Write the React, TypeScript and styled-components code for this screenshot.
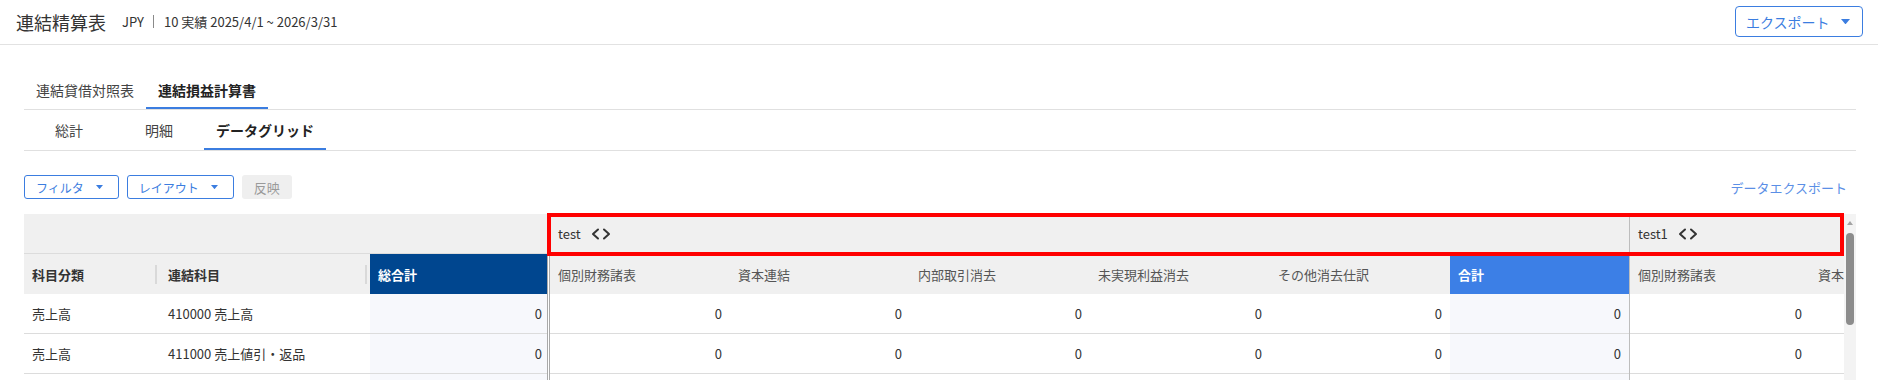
import React from 'react';
import styled, { createGlobalStyle } from 'styled-components';

const Blue = '#3b7de0';
const Line = '#dcdcdc';
const HeadBg = '#f0f0f0';

const GlobalStyle = createGlobalStyle`
  html, body { margin: 0; padding: 0; background: #fff; }
  body {
    font-family: "Noto Sans CJK JP", "Noto Sans", sans-serif;
    color: #333;
    overflow: hidden;
  }
  * { box-sizing: border-box; }
`;

const TopBar = styled.header`
    height: 45px;
    display: flex;
    align-items: center;
    justify-content: space-between;
    padding: 0 15px 1px 16px;
    border-bottom: 1px solid #e2e2e2;
`;

const TitleGroup = styled.div`
    display: flex;
    align-items: center;
`;

const Title = styled.h1`
    margin: 0 16px 0 0;
    font-size: 18px;
    font-weight: 400;
    line-height: 1;
    color: #333;
`;

const Meta = styled.div`
    display: flex;
    align-items: center;
    font-size: 13px;
    color: #333;
`;

const MetaDivider = styled.span`
    display: inline-block;
    width: 1px;
    height: 13px;
    background: #8a8a8a;
    margin: 0 10px 0 9px;
`;

const ExportButton = styled.button`
    width: 128px;
    height: 31px;
    display: flex;
    align-items: center;
    justify-content: space-between;
    padding: 0 12px 0 10px;
    background: #fff;
    border: 1px solid ${Blue};
    border-radius: 4px;
    color: ${Blue};
    font-family: inherit;
    font-size: 14px;
`;

const Main = styled.main`
    padding: 0 22px 0 24px;
`;

const Tabs = styled.nav`
    margin-top: 24px;
    height: 41px;
    display: flex;
    border-bottom: 1px solid #e0e0e0;
`;

const Tab = styled.div<{ $active?: boolean }>`
    height: 40px;
    padding: 4px 12px 0;
    display: flex;
    align-items: center;
    font-size: 14px;
    font-weight: ${p => (p.$active ? 700 : 400)};
    color: ${p => (p.$active ? '#222' : '#444')};
    border-bottom: 2px solid ${p => (p.$active ? Blue : 'transparent')};
`;

const SubTabs = styled(Tabs)`
    margin-top: 0;
`;

const SubTab = styled(Tab)`
    min-width: 90px;
    padding: 2px 12px 0;
    justify-content: center;
`;

const Toolbar = styled.div`
    margin-top: 24px;
    height: 24px;
    display: flex;
    align-items: center;
    justify-content: space-between;
`;

const ButtonGroup = styled.div`
    display: flex;
    gap: 8px;
`;

const DropButton = styled.button`
    height: 24px;
    display: flex;
    align-items: center;
    gap: 12px;
    padding: 0 15px 0 11px;
    background: #fff;
    border: 1px solid ${Blue};
    border-radius: 3px;
    color: ${Blue};
    font-family: inherit;
    font-size: 12px;
`;

const ApplyButton = styled.button`
    height: 24px;
    padding: 0 12px;
    background: #efefef;
    border: none;
    border-radius: 3px;
    color: #9a9a9a;
    font-family: inherit;
    font-size: 13px;
`;

const TextLink = styled.a`
    margin-right: 9px;
    font-size: 13px;
    color: #5b8fe6;
    text-decoration: none;
`;

const Grid = styled.div`
    position: relative;
    margin-top: 15px;
    height: 180px;
    display: flex;
`;

const PinnedPane = styled.div`
    flex: none;
    width: 526px;
    border-right: 3px double #a9a9a9;
`;

const ScrollPane = styled.div`
    flex: 1;
    min-width: 0;
    overflow: hidden;
    display: flex;
`;

const ColumnGroup = styled.div<{ $width: number }>`
    flex: none;
    width: ${p => p.$width}px;
    border-right: 1px solid #bdbdbd;
`;

const Row = styled.div<{ $head?: boolean }>`
    height: 40px;
    display: flex;
    border-bottom: 1px solid ${Line};
    background: ${p => (p.$head ? HeadBg : '#fff')};
`;

const GroupTitle = styled.div`
    height: 40px;
    display: flex;
    align-items: center;
    gap: 10px;
    padding-left: 8px;
    background: ${HeadBg};
    border-bottom: 1px solid ${Line};
    font-size: 13px;
    color: #333;
`;

type Tone = 'plain' | 'navy' | 'blue';
const toneBg: Record<Tone, string> = { plain: HeadBg, navy: '#00468f', blue: '#3c7fe6' };

const HeadCell = styled.div<{ $w: number; $tone?: Tone; $bold?: boolean; $handle?: boolean }>`
    position: relative;
    flex: none;
    width: ${p => p.$w}px;
    height: 40px;
    margin-bottom: -1px;
    display: flex;
    align-items: center;
    padding: 0 8px;
    font-size: 13px;
    font-weight: ${p => (p.$bold || (p.$tone && p.$tone !== 'plain') ? 700 : 400)};
    color: ${p => (p.$tone && p.$tone !== 'plain' ? '#fff' : p.$bold ? '#333' : '#555')};
    background: ${p => toneBg[p.$tone || 'plain']};
    &::after {
        content: '';
        display: ${p => (p.$handle ? 'block' : 'none')};
        position: absolute;
        right: 3px;
        top: 11px;
        width: 2px;
        height: 19px;
        background: #d9d9d9;
    }
`;

const Cell = styled.div<{ $w: number; $num?: boolean; $shade?: boolean; $pr?: number }>`
    flex: none;
    width: ${p => p.$w}px;
    display: flex;
    align-items: center;
    justify-content: ${p => (p.$num ? 'flex-end' : 'flex-start')};
    padding: 0 ${p => p.$pr ?? 8}px 0 8px;
    font-size: 13px;
    color: #333;
    background: ${p => (p.$shade ? '#f7f8fc' : 'transparent')};
`;

const Scrollbar = styled.div`
    flex: none;
    width: 12px;
    display: flex;
    flex-direction: column;
    align-items: center;
    padding-top: 7px;
    background: #f3f3f3;
`;

const ScrollArrow = styled.div`
    width: 0;
    height: 0;
    border-left: 3px solid transparent;
    border-right: 3px solid transparent;
    border-bottom: 4px solid #a3a3a3;
`;

const ScrollThumb = styled.div`
    margin-top: 8px;
    width: 8px;
    height: 92px;
    border-radius: 4px;
    background: #8c8c8c;
`;

const Highlight = styled.div`
    position: absolute;
    left: 523px;
    right: 12px;
    top: -1px;
    height: 43px;
    border: 4px solid #ff0000;
    pointer-events: none;
`;

const Caret = ({ size = 8 }: { size?: number }) => (
    <svg width={size} height={size * 0.6} viewBox="0 0 10 6" fill="currentColor">
        <polygon points="0,0 10,0 5,6" />
    </svg>
);

const Chevrons = () => (
    <svg width="20" height="12" viewBox="0 0 20 12" fill="none" stroke="#333" strokeWidth="2" strokeLinecap="round" strokeLinejoin="round">
        <polyline points="7,1.5 2,6 7,10.5" />
        <polyline points="13,1.5 18,6 13,10.5" />
    </svg>
);

const COL = 180;
const subColumns = ['個別財務諸表', '資本連結', '内部取引消去', '未実現利益消去', 'その他消去仕訳'];
const groups = ['test', 'test1'];
const rows: { category: string; account: string; value: string }[] = [
    { category: '売上高', account: '410000 売上高', value: '0' },
    { category: '売上高', account: '411000 売上値引・返品', value: '0' },
    // the next row only shows its top edge in the frame
    { category: '', account: '', value: '' },
];

export default function App() {
    return (
        <>
            <GlobalStyle />
            <TopBar>
                <TitleGroup>
                    <Title>連結精算表</Title>
                    <Meta>
                        JPY<MetaDivider />10 実績 2025/4/1 ~ 2026/3/31
                    </Meta>
                </TitleGroup>
                <ExportButton>
                    エクスポート
                    <Caret size={9} />
                </ExportButton>
            </TopBar>
            <Main>
                <Tabs>
                    <Tab>連結貸借対照表</Tab>
                    <Tab $active>連結損益計算書</Tab>
                </Tabs>
                <SubTabs>
                    <SubTab>総計</SubTab>
                    <SubTab>明細</SubTab>
                    <SubTab $active>データグリッド</SubTab>
                </SubTabs>
                <Toolbar>
                    <ButtonGroup>
                        <DropButton>
                            フィルタ
                            <Caret size={7} />
                        </DropButton>
                        <DropButton>
                            レイアウト
                            <Caret size={7} />
                        </DropButton>
                        <ApplyButton disabled>反映</ApplyButton>
                    </ButtonGroup>
                    <TextLink href="#">データエクスポート</TextLink>
                </Toolbar>
                <Grid>
                    <PinnedPane>
                        <Row $head />
                        <Row $head>
                            <HeadCell $w={136} $bold $handle>科目分類</HeadCell>
                            <HeadCell $w={210} $bold $handle>連結科目</HeadCell>
                            <HeadCell $w={177} $tone="navy">総合計</HeadCell>
                        </Row>
                        {rows.map((r, i) => (
                            <Row key={i}>
                                <Cell $w={136}>{r.category}</Cell>
                                <Cell $w={210}>{r.account}</Cell>
                                <Cell $w={177} $num $shade $pr={5}>{r.value}</Cell>
                            </Row>
                        ))}
                    </PinnedPane>
                    <ScrollPane>
                        {groups.map(g => (
                            <ColumnGroup key={g} $width={COL * (subColumns.length + 1)}>
                                <GroupTitle>
                                    {g}
                                    <Chevrons />
                                </GroupTitle>
                                <Row $head>
                                    {subColumns.map(c => (
                                        <HeadCell key={c} $w={COL}>{c}</HeadCell>
                                    ))}
                                    <HeadCell $w={COL - 1} $tone="blue">合計</HeadCell>
                                </Row>
                                {rows.map((r, i) => (
                                    <Row key={i}>
                                        {subColumns.map(c => (
                                            <Cell key={c} $w={COL} $num>{r.value}</Cell>
                                        ))}
                                        <Cell $w={COL - 1} $num $shade>{r.value}</Cell>
                                    </Row>
                                ))}
                            </ColumnGroup>
                        ))}
                    </ScrollPane>
                    <Scrollbar>
                        <ScrollArrow />
                        <ScrollThumb />
                    </Scrollbar>
                    <Highlight />
                </Grid>
            </Main>
        </>
    );
}
